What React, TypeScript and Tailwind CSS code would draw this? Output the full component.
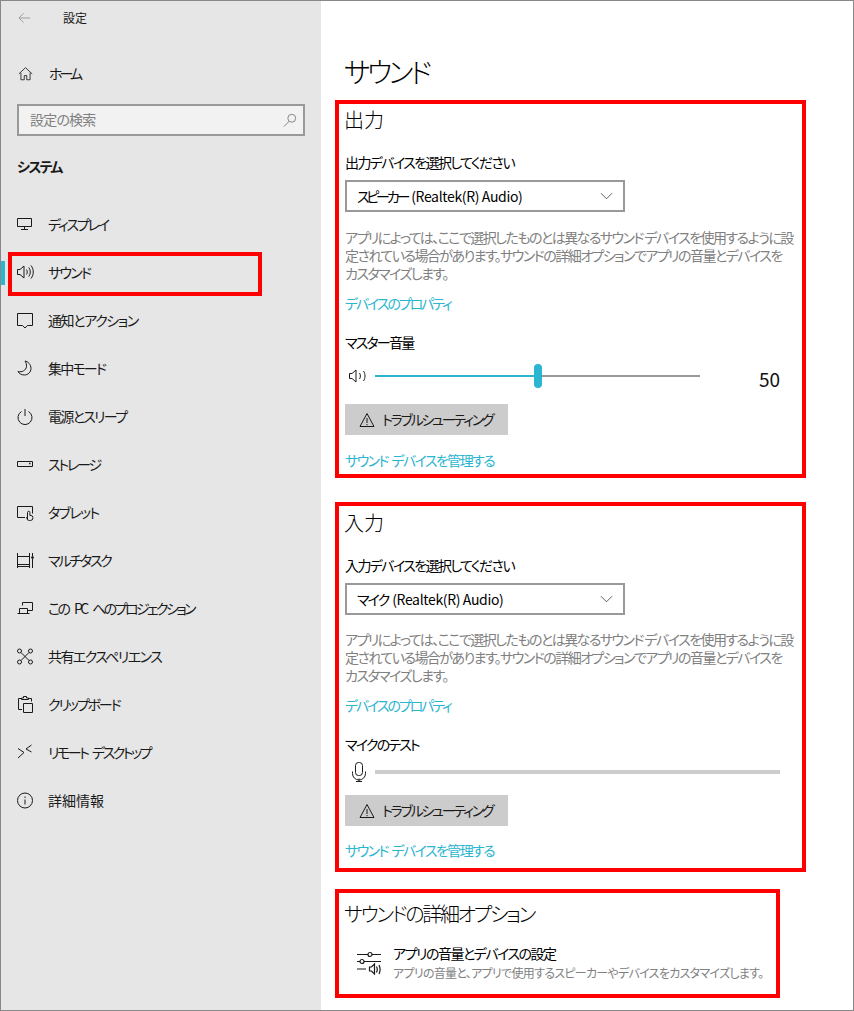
import React from "react";

const font = "font-['Noto_Sans_CJK_JP','Noto_Sans',sans-serif] [font-feature-settings:'palt']";

function Ico({ children, className = "w-[18px] h-[18px]" }: { children: React.ReactNode; className?: string }) {
  return (
    <svg viewBox="0 0 18 18" fill="none" stroke="#1a1a1a" strokeWidth="1" className={className}>
      {children}
    </svg>
  );
}

const speaker = (
  <>
    <path d="M1.500 6.500h2.500l4-3.500v12l-4-3.500h-2.500z" />
    <path d="M10.500 6.500c1 1.500 1 3.500 0 5" />
    <path d="M12.800 4.500c2 2.800 2 6.200 0 9" />
    <path d="M15 2.500c3 3.800 3 9.200 0 13" />
  </>
);

const nav: { label: string; track: string; icon: React.ReactNode }[] = [
  { label: "ディスプレイ", track: "tracking-[-2.2px]", icon: <path d="M1.500 3.500h14v8h-14zM8.500 11.500v2.500M5 14.500h7" /> },
  { label: "サウンド", track: "tracking-[-1.750px]", icon: speaker },
  { label: "通知とアクション", track: "tracking-[-1.400px]", icon: <path d="M1.500 2.500h15v12h-5l-2.500 2.500-2.500-2.500h-5z" /> },
  { label: "集中モード", track: "tracking-[-1.800px]", icon: <path d="M9 2c3 .5 6 3.500 6 7.500 0 3.500-3 6.500-6.500 6.500-3 0-5.500-1.500-6.500-3.500 4 1 8-1 8.500-5 .2-2-.5-4-1.500-5.500z" /> },
  { label: "電源とスリープ", track: "tracking-[-1.700px]", icon: <path d="M9 2v7M5.500 4.500a7 7 0 1 0 7 0" /> },
  { label: "ストレージ", track: "tracking-[-2.200px]", icon: <><path d="M1.500 6.500h15v5h-15z" /><path d="M13 8.500h1.500" strokeWidth="1.500" /></> },
  { label: "タブレット", track: "tracking-[-1.600px]", icon: <><path d="M9 14.500h-7.500v-11h15v7" /><path d="M11.500 16V9.500a1.200 1.200 0 0 1 2.400 0v3h1a2 2 0 0 1 2 2v.5a2.500 2.500 0 0 1-2.500 2.500h-1a2.500 2.500 0 0 1-2.500-2.500v-1z" /></> },
  { label: "マルチタスク", track: "tracking-[-2.200px]", icon: <><path d="M1.500 2v15M13.500 2v15M1.500 5.500h12M1.500 13.500h12M1.500 15.500h12" /><path d="M16.500 2v3M16.500 8v9" /><circle cx="16.500" cy="6.500" r="1" fill="#1a1a1a" /></> },
  { label: "この PC へのプロジェクション", track: "tracking-[-2.600px] [word-spacing:5px]", icon: <><path d="M6.500 6.500v-3h10v8h-5" /><path d="M3.500 9.500h8v5h-8zM1.500 14.500h12" /></> },
  { label: "共有エクスペリエンス", track: "tracking-[-1.600px]", icon: <><circle cx="3.500" cy="4" r="2" /><circle cx="14.500" cy="4" r="2" /><circle cx="3.500" cy="15" r="2" /><circle cx="14.500" cy="15" r="2" /><path d="M5 5.500l8 8M13 5.500l-8 8" /></> },
  { label: "クリップボード", track: "tracking-[-2.100px]", icon: <><path d="M6 14.500h-3.500v-11h3M12.500 3.500h3v3" /><path d="M5.500 4.500v-1.500h2v-1.500h3v1.500h2v1.500z" /><path d="M7.500 8.500h9v9h-9z" /></> },
  { label: "リモート デスクトップ", track: "tracking-[-2.500px] [word-spacing:4px]", icon: <path d="M2 5.500l6 4-6 5.500M15.500 2l-5.500 4 5.500 3" /> },
  { label: "詳細情報", track: "tracking-normal", icon: <><circle cx="9" cy="9.500" r="7.500" /><path d="M9 8.500v5M9 5.500v1.500" /></> },
];

function Warn() {
  return (
    <svg viewBox="0 0 16 16" fill="none" stroke="#1a1a1a" strokeWidth="1" className="w-4 h-4 shrink-0">
      <path d="M8 1.500l7 13h-14zM8 6v5M8 12v1.200" />
    </svg>
  );
}

function Troubleshoot() {
  return (
    <div className="flex items-center w-[163px] h-[31px] bg-[#cccccc] pl-[14px] gap-[7px] text-[14px] text-[#1a1a1a]">
      <Warn />
      <span className="whitespace-nowrap tracking-[-2.200px]">トラブルシューティング</span>
    </div>
  );
}

function Select({ name, track }: { name: string; track: string }) {
  return (
    <div className="flex items-center justify-between w-[280px] h-8 border-2 border-[#999999] bg-white pl-[10px] pr-[10px] text-[14px] text-black">
      <span className="whitespace-nowrap">
        <span className={track}>{name}</span>
        <span className="ml-[4px] tracking-[-0.350px]">(Realtek(R) Audio)</span>
      </span>
      <svg viewBox="0 0 14 8" fill="none" stroke="#555555" strokeWidth="1" className="w-[13px] h-2">
        <path d="M1 1l6 6 6-6" />
      </svg>
    </div>
  );
}

function Description({ className }: { className: string }) {
  return (
    <p className={`h-[54px] whitespace-nowrap text-[14px] leading-[18px] tracking-[-1.550px] text-[#808080] ${className}`}>
      アプリによっては、ここで選択したものとは異なるサウンド デバイスを使用するように設
      <br />
      定されている場合があります。サウンドの詳細オプションでアプリの音量とデバイスを
      <br />
      カスタマイズします。
    </p>
  );
}

function Link({ children, className }: { children: React.ReactNode; className: string }) {
  return <div className={`h-5 flex items-center text-[14px] text-[#2bb5d0] ${className}`}>{children}</div>;
}

function Heading({ children, className = "" }: { children: React.ReactNode; className?: string }) {
  return <h2 className={`flex items-center text-[20px] font-light text-black ${className}`}>{children}</h2>;
}

function Label({ children, className }: { children: React.ReactNode; className: string }) {
  return <div className={`h-5 flex items-center text-[14px] text-black ${className}`}>{children}</div>;
}

export default function App() {
  return (
    <div className={`w-[854px] h-[1011px] flex overflow-hidden bg-white border border-[#888888] ${font}`}>
      <aside className="relative w-[320px] shrink-0 bg-[#e6e6e6] flex flex-col">
        <div className="h-[33px] flex items-center">
          <svg viewBox="0 0 14 12" fill="none" stroke="#999999" strokeWidth="1" className="ml-[17px] w-[13px] h-3">
            <path d="M13 6h-12M6 1l-5 5 5 5" />
          </svg>
          <span className="ml-[32px] text-[12px] text-[#1a1a1a]">設定</span>
        </div>
        <div className="mt-[15px] h-12 flex items-center pl-[17px] text-[14px] text-[#1a1a1a]">
          <Ico className="w-[15px] h-[15px] mr-[16px]">
            <path d="M1 9.500l8-7.500 8 7.500M3.500 8v8.500h4v-5h3v5h4V8" />
          </Ico>
          <span className="tracking-[-3px]">ホーム</span>
        </div>
        <div className="ml-[16px] mt-[7px] w-[288px] h-[32px] border-2 border-[#999999] bg-[#f2f2f2] flex items-center justify-between pl-[11px] pr-[6px] text-[14px] text-[#808080]">
          <span className="-translate-y-px tracking-[-0.800px]">設定の検索</span>
          <svg viewBox="0 0 16 16" fill="none" stroke="#777777" strokeWidth="1" className="w-[14px] h-[14px]">
            <circle cx="10" cy="6" r="4.500" />
            <path d="M7 9.500l-6 6" />
          </svg>
        </div>
        <div className="ml-[16px] mt-[18px] h-6 flex items-center text-[14px] font-bold tracking-[-1.750px] text-[#1a1a1a]">システム</div>
        <nav className="mt-[22px] flex flex-col">
          {nav.map((item) => (
            <div key={item.label} className="h-12 flex items-center pl-[15px] text-[14px] text-[#1a1a1a]">
              <Ico className="w-[18px] h-[18px] mr-[14px] shrink-0">{item.icon}</Ico>
              <span className={item.track}>{item.label}</span>
            </div>
          ))}
        </nav>
        <div className="absolute left-0 top-[260px] w-1 h-6 bg-[#2bb5d0]" />
        <div className="absolute left-[7px] top-[251px] w-[254px] h-11 border-4 border-[#ff0000]" />
      </aside>

      <main className="flex-1 pl-[14px] pt-[49px]">
        <h1 className="h-[42px] pl-[9px] flex items-center text-[28px] font-light tracking-[-3.500px] text-black">サウンド</h1>
        <div className="mt-[8px] w-[471px] h-[378px] border-4 border-[#ff0000] pl-[6px]">
          <Heading className="h-8 -ml-px">出力</Heading>
          <Label className="mt-4 tracking-[-1.600px]">出力デバイスを選択してください</Label>
          <div className="mt-2"><Select name="スピーカー" track="tracking-[-3.200px]" /></div>
          <Description className="mt-4" />
          <Link className="mt-[11px] tracking-[-2.100px]">デバイスのプロパティ</Link>
          <Label className="mt-[19px] tracking-[-1.800px]">マスター音量</Label>
          <div className="mt-3 h-6 flex items-center w-[435px]">
            <Ico className="w-[18px] h-[18px] ml-[4px] mr-[8px] shrink-0">
              <path d="M0.500 6.500h2.500l4-3.500v12l-4-3.500h-2.500z" />
              <path d="M10.500 6c1.200 1.800 1.200 4.200 0 6" />
              <path d="M14.500 4c2 3 2 7 0 10" />
            </Ico>
            <div className="w-[159px] h-[2px] bg-[#2bb5d0]" />
            <div className="w-2 h-6 rounded-full bg-[#2bb5d0]" />
            <div className="w-[158px] h-[2px] bg-[#999999]" />
            <span className="ml-auto translate-y-[3px] text-[19px] text-[#111111]">50</span>
          </div>
          <div className="mt-4"><Troubleshoot /></div>
          <Link className="mt-[15px] tracking-[-1.600px] [word-spacing:2px]">サウンド デバイスを管理する</Link>
        </div>

        <div className="mt-6 w-[471px] h-[370px] border-4 border-[#ff0000] pl-[6px]">
          <Heading className="h-[33px] -ml-px">入力</Heading>
          <Label className="mt-4 tracking-[-1.600px]">入力デバイスを選択してください</Label>
          <div className="mt-2"><Select name="マイク" track="tracking-[-2px]" /></div>
          <Description className="mt-[15px]" />
          <Link className="mt-[11px] tracking-[-2.100px]">デバイスのプロパティ</Link>
          <Label className="mt-[19px] tracking-[-1.850px]">マイクのテスト</Label>
          <div className="mt-2 h-5 flex items-center">
            <svg viewBox="0 0 16 20" fill="none" stroke="#1a1a1a" strokeWidth="1" className="ml-[6px] w-4 h-5 shrink-0">
              <rect x="4.500" y="0.500" width="7" height="13" rx="3" />
              <path d="M1.500 9.500v2a5 5 0 0 0 13 0v-2M8 16.500v3M5 19.500h6" />
            </svg>
            <div className="ml-2 w-[405px] h-1 bg-[#cccccc]" />
          </div>
          <div className="mt-[13px]"><Troubleshoot /></div>
          <Link className="mt-[14px] tracking-[-1.600px] [word-spacing:2px]">サウンド デバイスを管理する</Link>
        </div>

        <div className="mt-[17px] w-[445px] h-[109px] border-4 border-[#ff0000] pl-[6px] pt-[5px]">
          <Heading className="h-8 -ml-px tracking-[-2.300px]">サウンドの詳細オプション</Heading>
          <div className="mt-[13px] flex items-center">
            <svg viewBox="0 0 24 24" fill="none" stroke="#1a1a1a" strokeWidth="1.200" className="ml-[12px] w-6 h-6 shrink-0">
              <path d="M0 3.500h11M15 3.500h9M0 10.500h3M7 10.500h17M0 18h9" />
              <circle cx="13" cy="3.500" r="2" />
              <circle cx="5" cy="10.500" r="2" />
              <path d="M12.500 16h2l3-3v10l-3-3h-2zM19.500 15.500c1 2 1 4 0 6M22 14c1.500 3 1.500 6 0 9" />
            </svg>
            <div className="ml-3 flex flex-col">
              <span className="h-5 flex items-center whitespace-nowrap text-[14px] tracking-[-1.500px] text-black">アプリの音量とデバイスの設定</span>
              <span className="h-5 flex items-center whitespace-nowrap text-[12px] tracking-[-0.700px] text-[#808080]">アプリの音量と、アプリで使用するスピーカーやデバイスをカスタマイズします。</span>
            </div>
          </div>
        </div>
      </main>
    </div>
  );
}
